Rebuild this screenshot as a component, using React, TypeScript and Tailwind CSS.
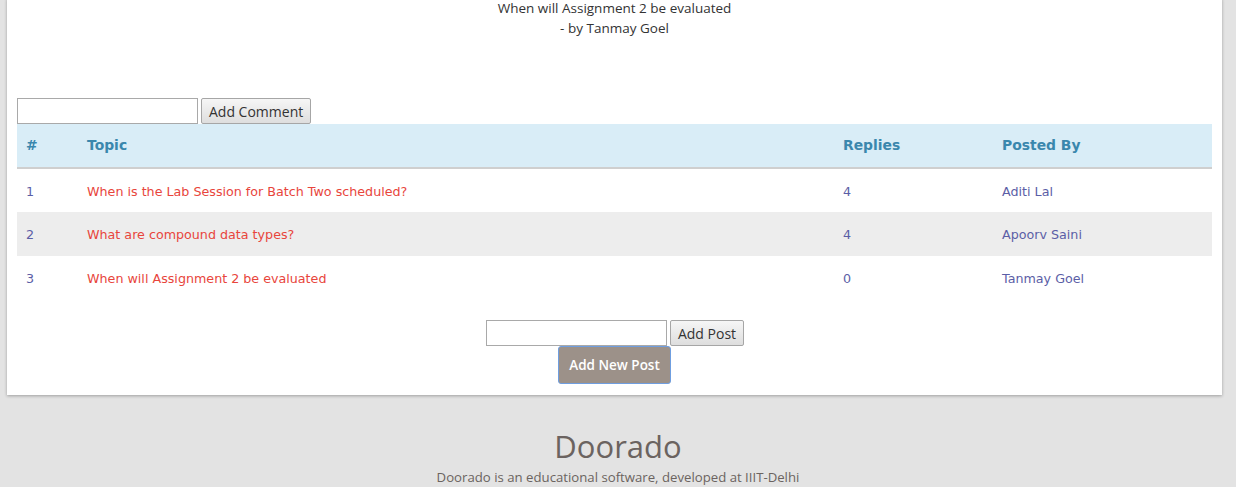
import React from 'react';

const posts = [
  { id: 1, topic: 'When is the Lab Session for Batch Two scheduled?', replies: 4, by: 'Aditi Lal' },
  { id: 2, topic: 'What are compound data types?', replies: 4, by: 'Apoorv Saini' },
  { id: 3, topic: 'When will Assignment 2 be evaluated', replies: 0, by: 'Tanmay Goel' },
];

const body = "font-['Open_Sans',sans-serif]";
const cell = "font-['DejaVu_Sans',sans-serif] text-[12.7px]";
const head = "font-['DejaVu_Sans',sans-serif] text-[13.9px] font-bold text-left text-[#3a87ad]";

const GrayButton = ({ label }: { label: string }) => (
  <button className={`h-[26px] px-[7px] rounded-[2px] border border-[#a6a6a6] bg-gradient-to-b from-[#f6f6f6] to-[#dedede] text-[14px] text-[#333] ${body}`}>
    {label}
  </button>
);

const App = () => {
  return (
    <div className={`min-h-[488px] bg-[#e3e3e3] ${body}`}>
      <div className="ml-[7px] w-[1215px] bg-white px-[10px] pb-[11px] shadow-[0_1px_3px_rgba(0,0,0,0.3)]">
        <div className="-mt-[2px] text-center text-[13.5px] leading-[20px] text-[#333]">
          <p>When will Assignment 2 be evaluated</p>
          <p>- by Tanmay Goel</p>
        </div>

        <div className="mt-[60px] flex gap-[3px]">
          <input className="h-[26px] w-[181px] border border-[#a9a9a9] bg-white" />
          <GrayButton label="Add Comment" />
        </div>

        <table className="w-full border-collapse">
          <thead>
            <tr className="h-[44px] bg-[#d9edf7] border-b-2 border-[#cfcfcf]">
              <th className={`${head} w-[62px] pl-[9px]`}>#</th>
              <th className={`${head} w-[756px] pl-[8px]`}>Topic</th>
              <th className={`${head} w-[159px] pl-[8px]`}>Replies</th>
              <th className={`${head} pl-[8px]`}>Posted By</th>
            </tr>
          </thead>
          <tbody>
            {posts.map((p, i) => (
              <tr key={p.id} className={`h-[44px] ${i === 1 ? 'bg-[#ededed]' : 'bg-white'}`}>
                <td className={`${cell} pl-[9px] pt-[2px] text-[#5b5ea6]`}>{p.id}</td>
                <td className={`${cell} pl-[8px] pt-[2px] text-[#e8453c]`}>{p.topic}</td>
                <td className={`${cell} pl-[8px] pt-[2px] text-[#5b5ea6]`}>{p.replies}</td>
                <td className={`${cell} pl-[8px] pt-[2px] text-[#5b5ea6]`}>{p.by}</td>
              </tr>
            ))}
          </tbody>
        </table>

        <div className="mt-[20px] flex flex-col items-center">
          <div className="flex gap-[3px] pl-[1px]">
            <input className="h-[26px] w-[181px] border border-[#a9a9a9] bg-white" />
            <GrayButton label="Add Post" />
          </div>
          <button className="h-[38px] w-[113px] pt-[1px] rounded-[3px] border border-[#6f9ee0] bg-[#9c9189] text-[13.5px] font-semibold text-white">
            Add New Post
          </button>
        </div>
      </div>

      <div className="pt-[31px] text-center text-[#6b6360]">
        <h2 className="text-[31px] leading-[40px]">Doorado</h2>
        <p className="mt-[1px] text-[13.2px] leading-[20px]">Doorado is an educational software, developed at IIIT-Delhi</p>
      </div>
    </div>
  );
};

export default App;
